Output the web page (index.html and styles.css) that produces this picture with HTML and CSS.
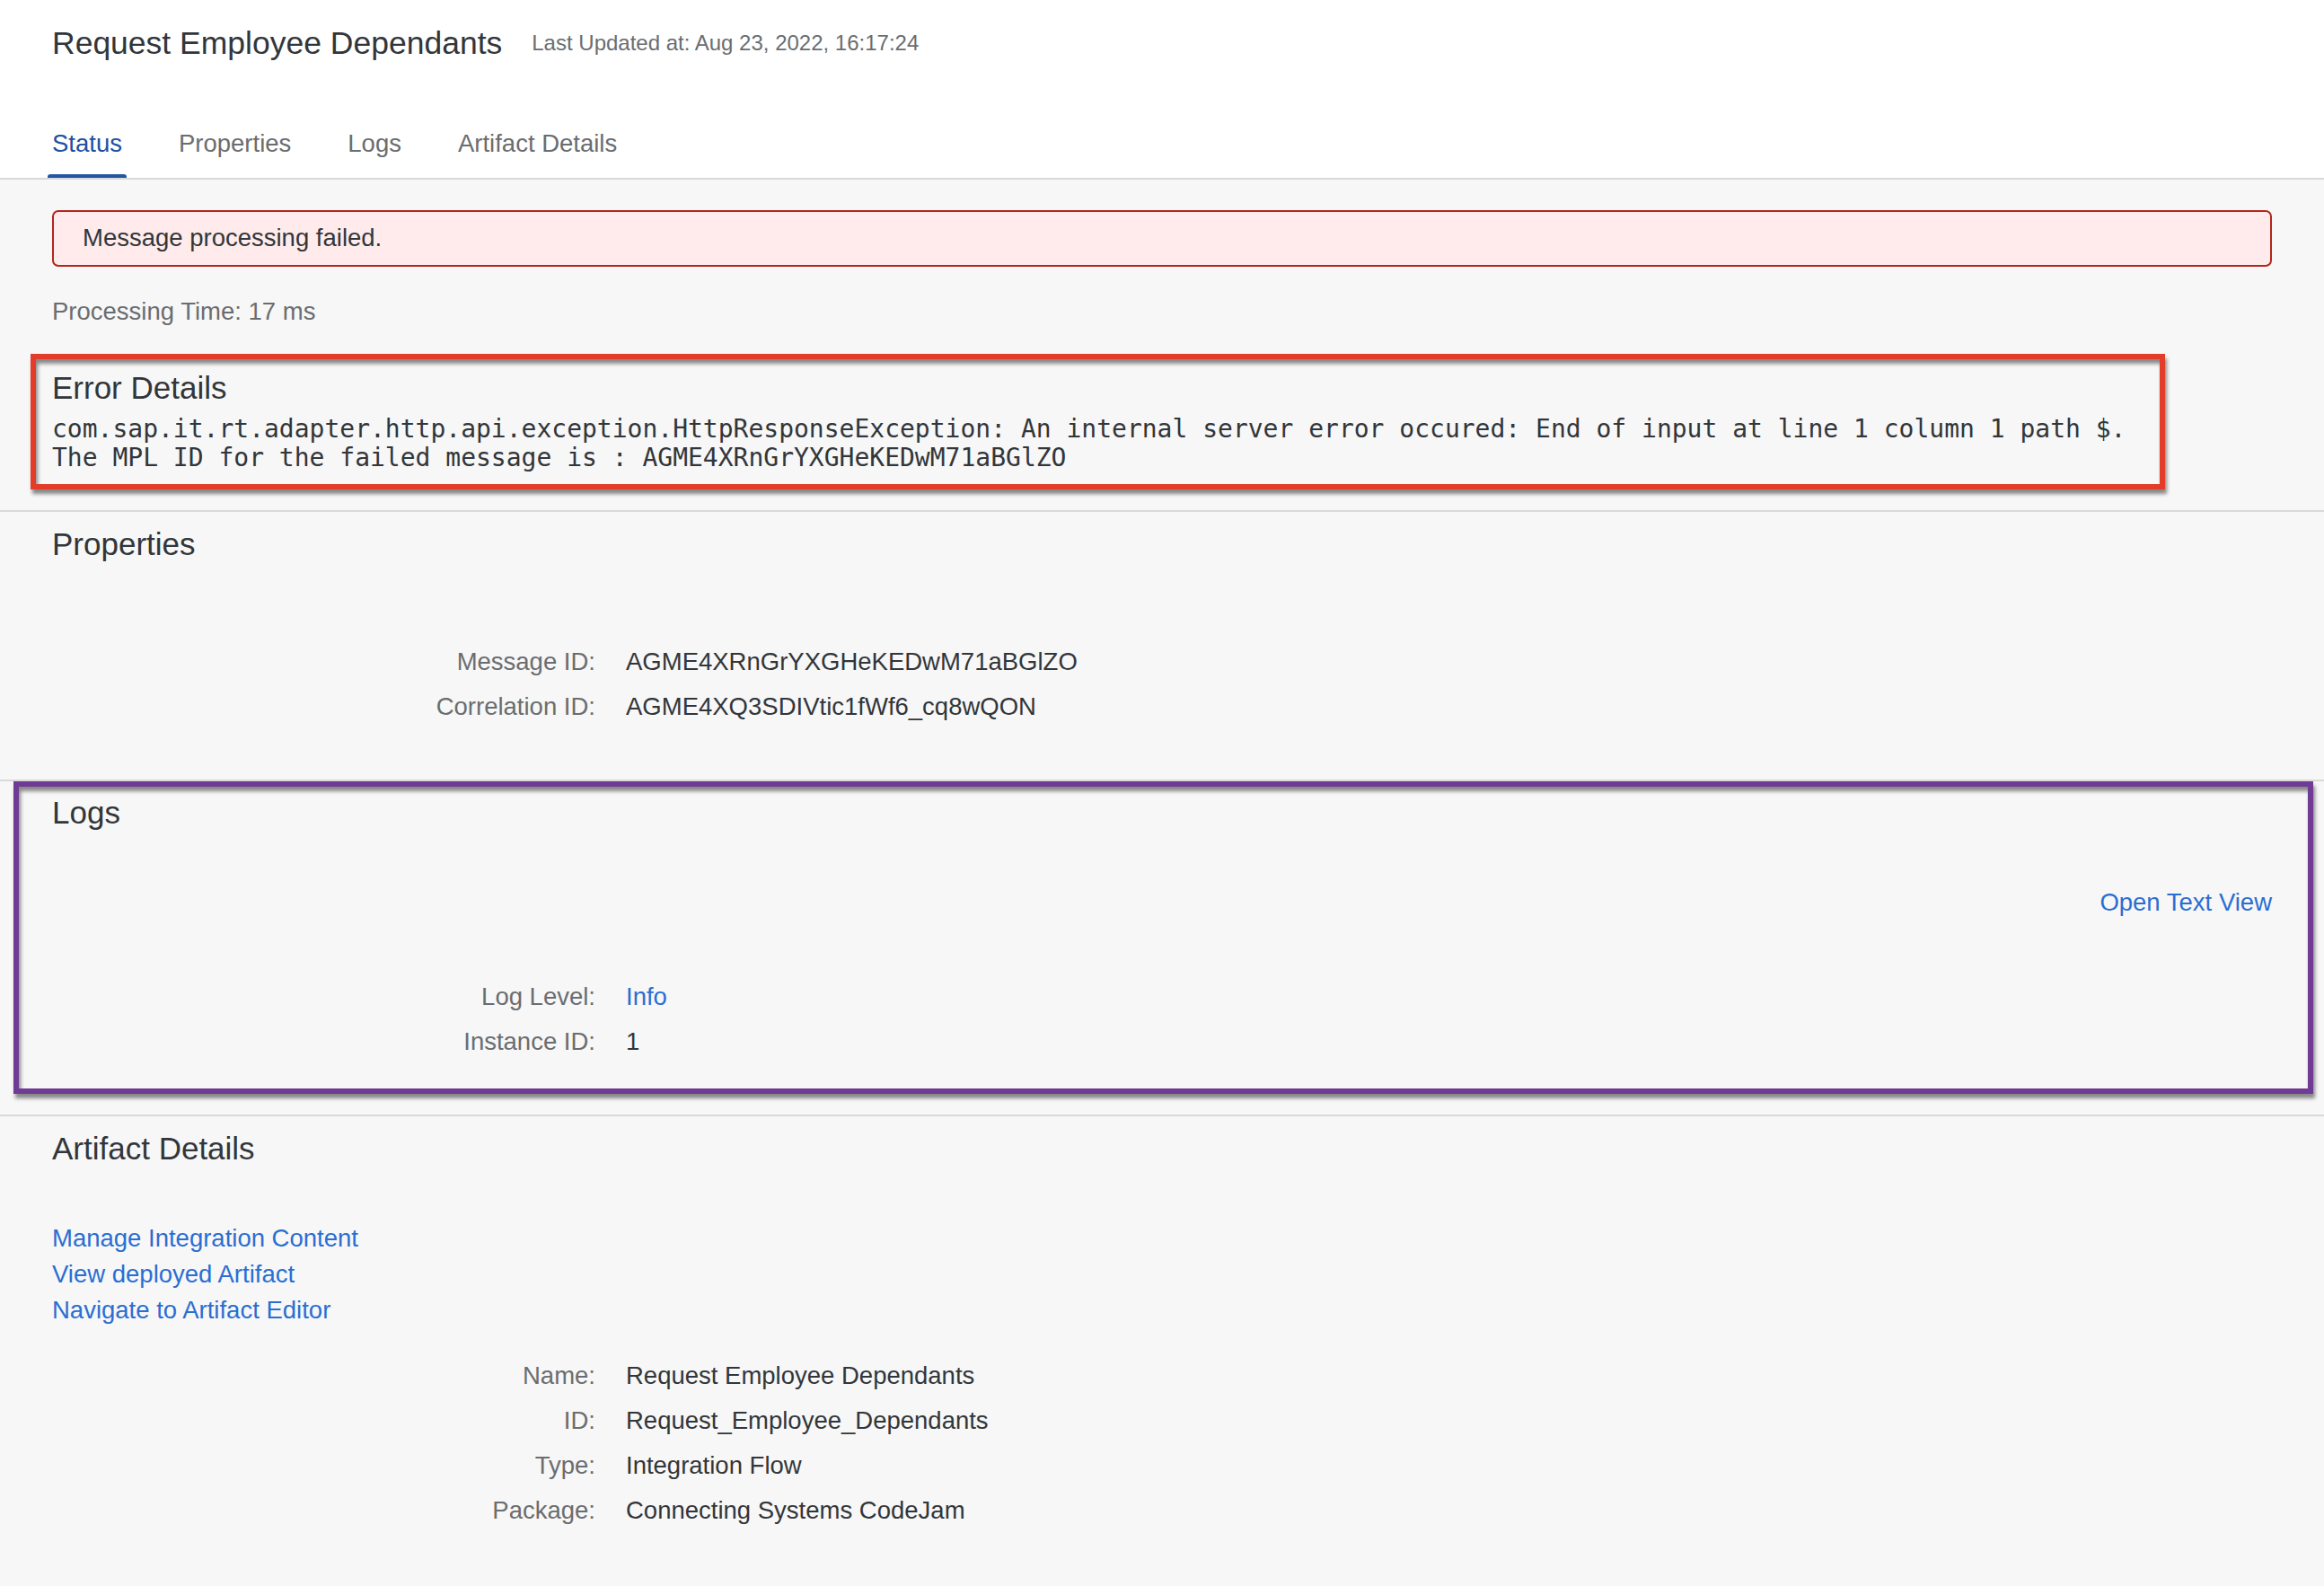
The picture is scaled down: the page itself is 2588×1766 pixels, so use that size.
FILE: index.html
```html
<!DOCTYPE html>
<html lang="en">
<head>
  <meta charset="UTF-8">
  <meta name="viewport" content="width=device-width, initial-scale=1.0">
  <title>Request Employee Dependants</title>
  <link rel="stylesheet" href="styles.css">
</head>
<body>
  <header class="page-header">
    <div class="title-row">
      <h1 class="page-title">Request Employee Dependants</h1>
      <span class="updated">Last Updated at: Aug 23, 2022, 16:17:24</span>
    </div>
    <nav class="tabs">
      <a class="tab active" href="#status">Status</a>
      <a class="tab" href="#properties">Properties</a>
      <a class="tab" href="#logs">Logs</a>
      <a class="tab" href="#artifact">Artifact Details</a>
    </nav>
  </header>

  <main>
    <section class="section status" id="status">
      <div class="strip">Message processing failed.</div>
      <p class="processing">Processing Time: 17 ms</p>
      <div class="mark mark-red">
        <h2 class="section-title">Error Details</h2>
        <pre class="error-text">com.sap.it.rt.adapter.http.api.exception.HttpResponseException: An internal server error occured: End of input at line 1 column 1 path $.
The MPL ID for the failed message is : AGME4XRnGrYXGHeKEDwM71aBGlZO</pre>
      </div>
    </section>

    <section class="section properties" id="properties">
      <h2 class="section-title">Properties</h2>
      <div class="form form-props">
        <span class="label">Message ID:</span>
        <span class="value">AGME4XRnGrYXGHeKEDwM71aBGlZO</span>
        <span class="label">Correlation ID:</span>
        <span class="value">AGME4XQ3SDIVtic1fWf6_cq8wQON</span>
      </div>
    </section>

    <section class="section logs" id="logs">
      <div class="mark mark-purple">
        <h2 class="section-title">Logs</h2>
        <div class="toolbar">
          <a class="link" href="#logs">Open Text View</a>
        </div>
        <div class="form form-logs">
          <span class="label">Log Level:</span>
          <a class="value link" href="#logs">Info</a>
          <span class="label">Instance ID:</span>
          <span class="value">1</span>
        </div>
      </div>
    </section>

    <section class="section artifact" id="artifact">
      <h2 class="section-title">Artifact Details</h2>
      <div class="link-list">
        <a class="link" href="#artifact">Manage Integration Content</a>
        <a class="link" href="#artifact">View deployed Artifact</a>
        <a class="link" href="#artifact">Navigate to Artifact Editor</a>
      </div>
      <div class="form form-artifact">
        <span class="label">Name:</span>
        <span class="value">Request Employee Dependants</span>
        <span class="label">ID:</span>
        <span class="value">Request_Employee_Dependants</span>
        <span class="label">Type:</span>
        <span class="value">Integration Flow</span>
        <span class="label">Package:</span>
        <span class="value">Connecting Systems CodeJam</span>
      </div>
    </section>
  </main>
</body>
</html>
```

FILE: styles.css
```css
* {
  margin: 0;
  padding: 0;
  box-sizing: border-box;
}

html, body {
  height: 100%;
}

body {
  background: #f7f7f7;
  color: #32363a;
  font-family: "Liberation Sans", Arial, sans-serif;
  font-size: 27.5px;
  line-height: 40px;
  overflow: hidden;
}

a {
  text-decoration: none;
}

/* Header */
.page-header {
  background: #fff;
  padding: 26px 0 0 58px;
  border-bottom: 2px solid #d9d9d9;
}

.title-row {
  display: flex;
  align-items: center;
  gap: 33px;
  height: 44px;
}

.page-title {
  font-size: 35.5px;
  line-height: 44px;
  font-weight: normal;
  color: #32363a;
}

.updated {
  font-size: 24px;
  line-height: 32px;
  color: #6a6d70;
}

.tabs {
  display: flex;
  gap: 53px;
  margin: 70px 0 0 -5px;
}

.tab {
  position: relative;
  padding: 0 5px 18px;
  font-size: 27.5px;
  line-height: 40px;
  color: #6a6d70;
}

.tab.active {
  color: #1d51a0;
}

.tab.active::after {
  content: "";
  position: absolute;
  left: 0;
  right: 0;
  bottom: 0;
  height: 4px;
  border-radius: 3px 3px 0 0;
  background: #2455a3;
}

/* Sections */
.section {
  border-bottom: 2px solid #d9d9d9;
}

.section-title {
  font-size: 35px;
  line-height: 42px;
  font-weight: normal;
  color: #32363a;
}

.status {
  padding: 34px 58px 23px;
}

.strip {
  border: 2px solid #b3261c;
  border-radius: 7px;
  background: #ffebeb;
  padding: 9px 32px 10px;
}

.processing {
  margin-top: 30px;
  color: #6a6d70;
}

.mark {
  box-shadow: 2px 5px 4px rgba(0, 0, 0, 0.45), inset 2px 5px 4px rgba(0, 0, 0, 0.45);
}

.mark-red {
  margin: 27px 119px 0 -24px;
  border: 6px solid #e33d2a;
  padding: 11px 0 13px 18px;
}

.error-text {
  margin-top: 9px;
  font-family: "DejaVu Sans Mono", "Liberation Mono", monospace;
  font-size: 28px;
  line-height: 32px;
  color: #32363a;
  white-space: pre;
}

.properties {
  padding: 15px 58px 61px;
}

.form {
  display: grid;
  grid-template-columns: 605px 1fr;
  column-gap: 34px;
  row-gap: 10px;
}

.form-props {
  margin-top: 90px;
}

.label {
  text-align: right;
  color: #6a6d70;
}

.value {
  color: #32363a;
  justify-self: start;
}

.link,
.value.link {
  color: #2a6ed3;
}

.logs {
  padding: 0 12px 23px 15px;
}

.mark-purple {
  border: 6px solid #6f3b94;
  padding: 8px 40px 32px 37px;
}

.toolbar {
  display: flex;
  justify-content: flex-end;
  margin-top: 59px;
}

.form-logs {
  margin-top: 65px;
}

.artifact {
  border-bottom: none;
  padding: 15px 58px 0;
}

.link-list {
  display: flex;
  flex-direction: column;
  align-items: flex-start;
  margin-top: 59px;
}

.form-artifact {
  margin-top: 33px;
}
```
